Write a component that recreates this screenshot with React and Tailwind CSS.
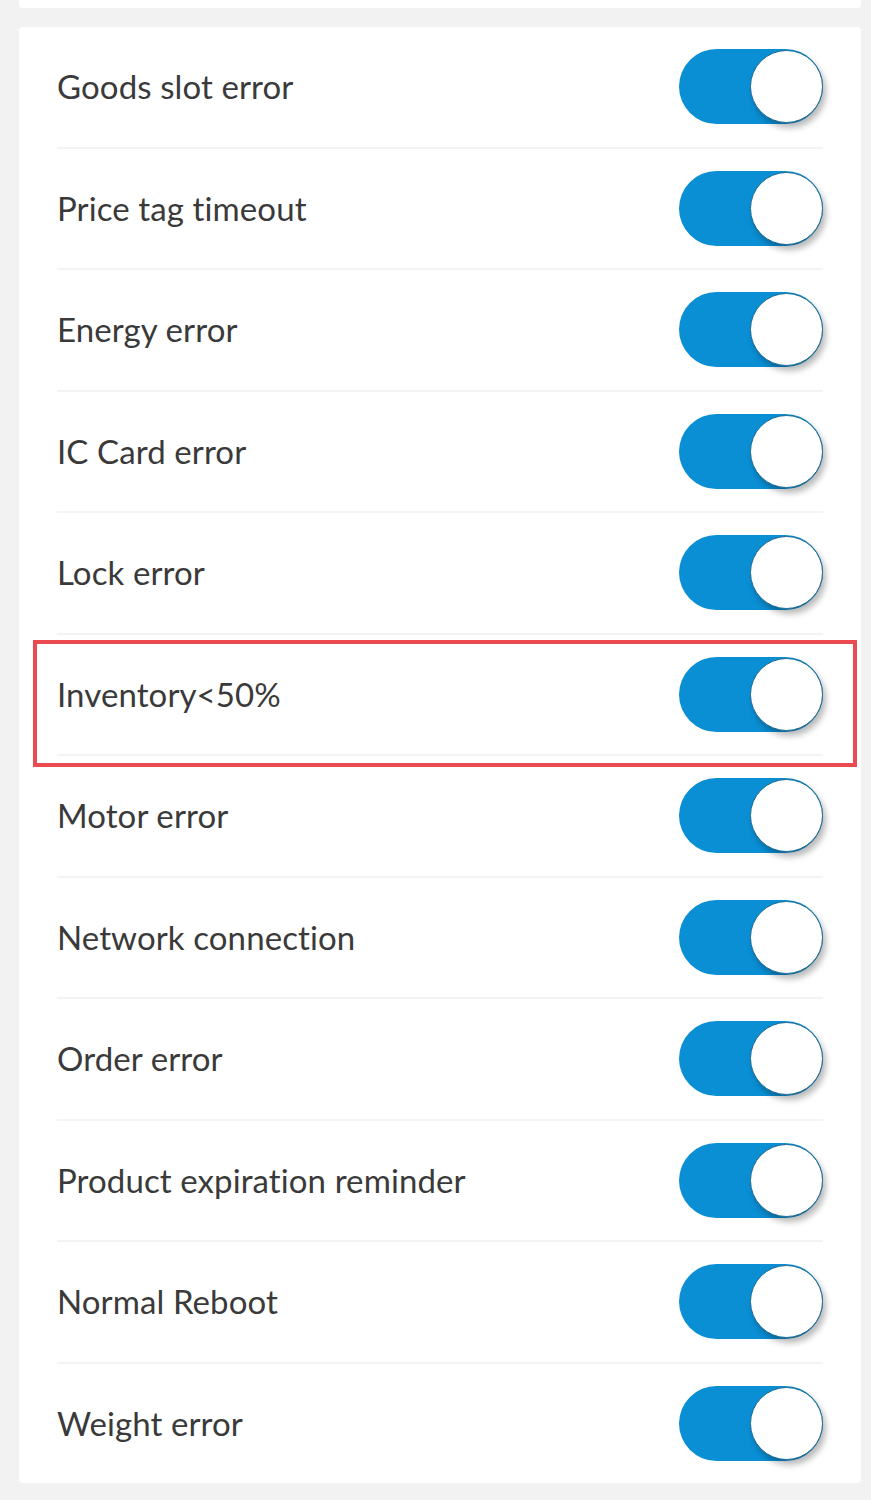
import React from "react";

const items = [
  "Goods slot error",
  "Price tag timeout",
  "Energy error",
  "IC Card error",
  "Lock error",
  "Inventory<50%",
  "Motor error",
  "Network connection",
  "Order error",
  "Product expiration reminder",
  "Normal Reboot",
  "Weight error",
];

function Toggle() {
  return (
    <div className="relative flex h-[75px] w-[144px] items-center justify-end rounded-full bg-[#0a8fd5]">
      <div className="h-[73px] w-[73px] rounded-full border-[1.5px] border-[#1e6b94] bg-white shadow-[3px_5px_6px_rgba(0,0,0,0.28)]" />
    </div>
  );
}

export default function App() {
  return (
    <div className="min-h-screen bg-[#f2f2f2] pl-[19px] pr-[10px] pb-[17px] font-['Lato',sans-serif] text-[#3a3a3a]">
      <div className="h-[8px] rounded-b-[3px] bg-white" />
      <div className="relative mt-[19px] flex h-[1456px] flex-col rounded-[4px] bg-white px-[38px]">
        {items.map((label, i) => (
          <div
            key={label}
            className={
              "flex flex-1 items-center justify-between " +
              (i < items.length - 1 ? "border-b-2 border-[#f3f3f3]" : "")
            }
          >
            <span className="text-[33px] leading-none tracking-[0.1px]">{label}</span>
            <Toggle />
          </div>
        ))}
        <div className="pointer-events-none absolute left-[14px] top-[613px] h-[127px] w-[824px] border-[4px] border-[#ea4b50]" />
      </div>
    </div>
  );
}
